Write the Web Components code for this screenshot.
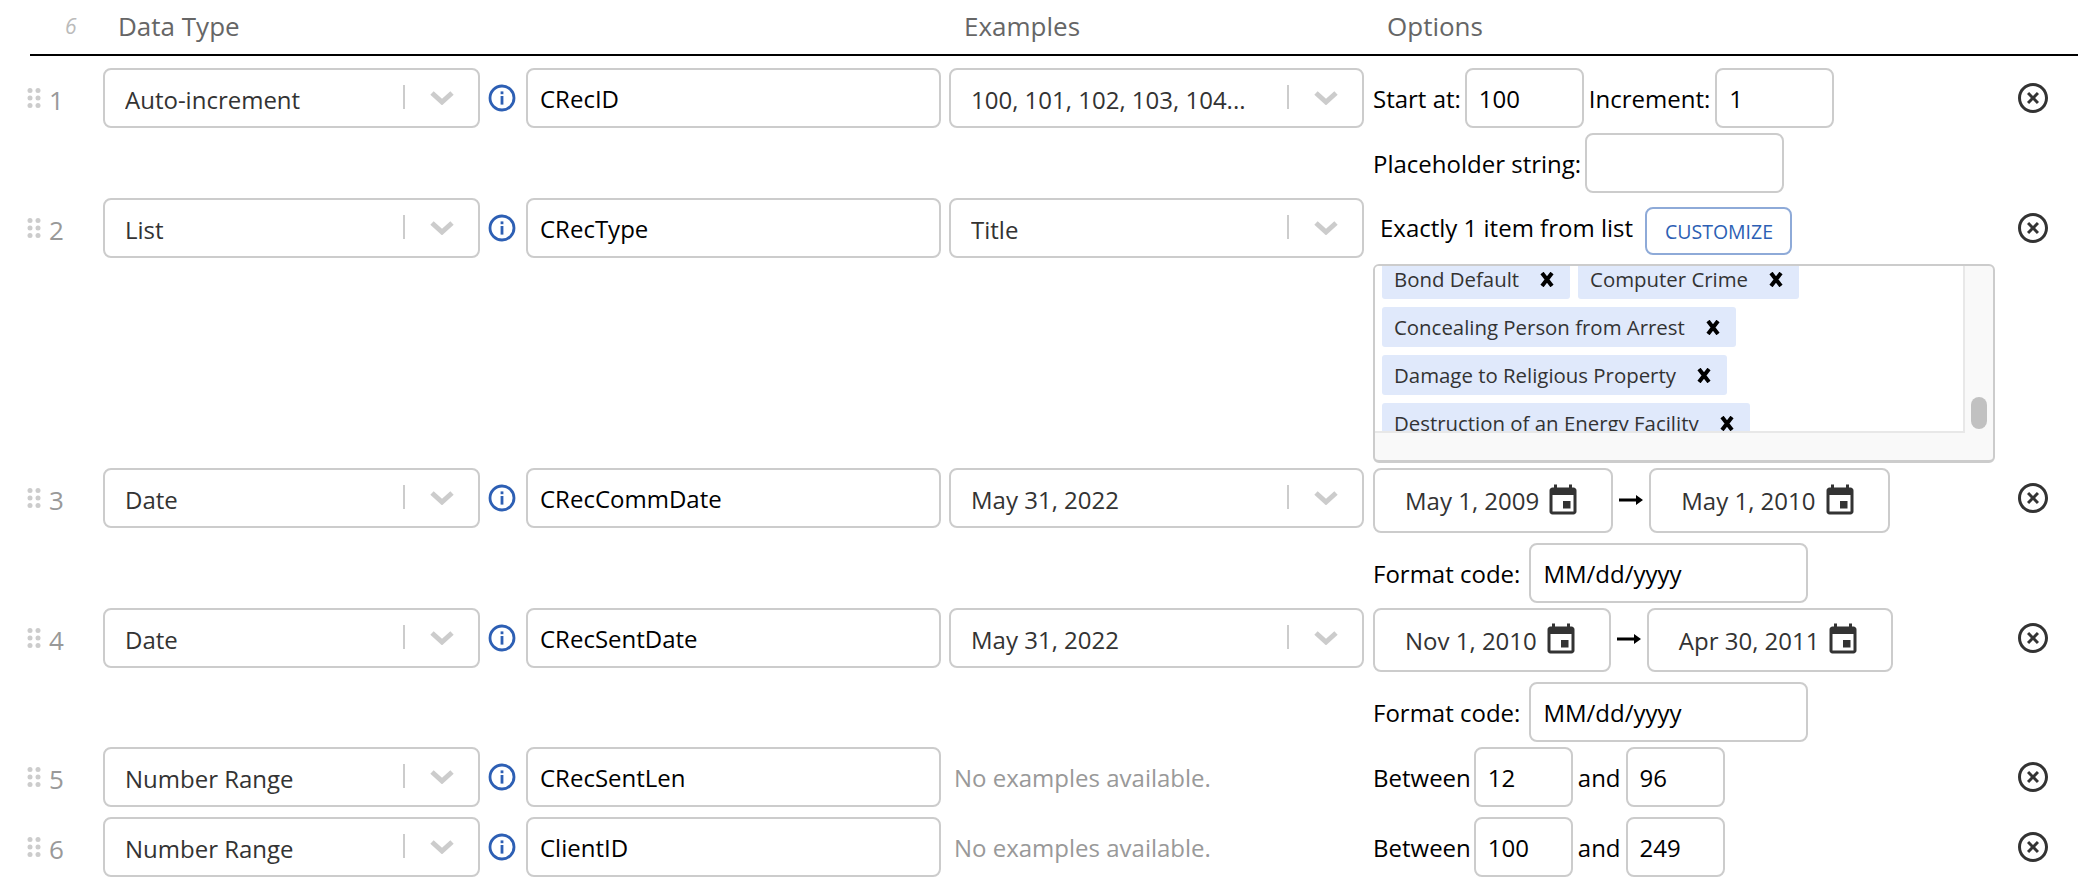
<!DOCTYPE html>
<html>
<head>
<meta charset="utf-8">
<style>
  html, body { margin: 0; padding: 0; background: #fff; overflow: hidden; }
  body { font-family: "Open Sans", sans-serif; font-size: 24px; color: #000; }
</style>
</head>
<body>
<sd-table>
  <sd-row num="1" type="Auto-increment" name="CRecID" example="100, 101, 102, 103, 104...">
    <sd-line>Start at:<sd-field style="width:119px;margin-left:-1px">100</sd-field>Increment:<sd-field style="width:119px">1</sd-field></sd-line>
    <sd-line style="margin-top:5px">Placeholder string:<sd-field style="width:199px;margin-left:-1px"></sd-field></sd-line>
  </sd-row>
  <sd-row num="2" type="List" name="CRecType" example="Title">
    <sd-line style="padding-left:7px"><span style="margin-top:-2px">Exactly 1 item from list</span><sd-button>CUSTOMIZE</sd-button></sd-line>
    <sd-list style="margin-top:6px">
      <sd-chip>Bond Default</sd-chip><sd-chip>Computer Crime</sd-chip>
      <sd-chip>Concealing Person from Arrest</sd-chip>
      <sd-chip>Damage to Religious Property</sd-chip>
      <sd-chip>Destruction of an Energy Facility</sd-chip>
    </sd-list>
  </sd-row>
  <sd-row num="3" type="Date" name="CRecCommDate" example="May 31, 2022">
    <sd-line style="height:65px"><sd-date>May 1, 2009</sd-date><sd-arrow></sd-arrow><sd-date>May 1, 2010</sd-date></sd-line>
    <sd-line style="margin-top:10px">Format code:<sd-field style="width:279px;margin-left:4px">MM/dd/yyyy</sd-field></sd-line>
  </sd-row>
  <sd-row num="4" type="Date" name="CRecSentDate" example="May 31, 2022">
    <sd-line style="height:64px"><sd-date>Nov 1, 2010</sd-date><sd-arrow></sd-arrow><sd-date>Apr 30, 2011</sd-date></sd-line>
    <sd-line style="margin-top:10px">Format code:<sd-field style="width:279px;margin-left:4px">MM/dd/yyyy</sd-field></sd-line>
  </sd-row>
  <sd-row num="5" type="Number Range" name="CRecSentLen">
    <sd-line>Between<sd-field style="width:99px;margin-left:-2px">12</sd-field>and<sd-field style="width:99px">96</sd-field></sd-line>
  </sd-row>
  <sd-row num="6" type="Number Range" name="ClientID">
    <sd-line>Between<sd-field style="width:99px;margin-left:-2px">100</sd-field>and<sd-field style="width:99px">249</sd-field></sd-line>
  </sd-row>
</sd-table>

<script>
const CHEVRON = `<svg width="24" height="14" viewBox="0 0 24 14"><path d="M2 2l10 9 10-9" fill="none" stroke="#ccc" stroke-width="5"/></svg>`;

class SdSelect extends HTMLElement {
  constructor() {
    super();
    this.attachShadow({ mode: 'open' }).innerHTML = `
      <style>
        :host { display: block; box-sizing: border-box; height: 60px; border: 2px solid #ccc; border-radius: 8px; background: #fff; color: #333; position: relative; }
        .box { display: flex; align-items: center; height: 100%; padding-left: 20px; }
        .val { flex: 1; white-space: nowrap; overflow: hidden; padding-top: 2px; }
        .sep { width: 2px; height: 24px; background: #ccc; margin-top: -2px; }
        .chev { width: 73px; display: flex; justify-content: center; }
      </style>
      <div class="box"><span class="val"><slot></slot></span><span class="sep"></span><span class="chev">${CHEVRON}</span></div>`;
  }
}
customElements.define('sd-select', SdSelect);

class SdField extends HTMLElement {
  constructor() {
    super();
    this.attachShadow({ mode: 'open' }).innerHTML = `
      <style>
        :host { display: flex; align-items: center; box-sizing: border-box; height: 60px; flex: none; border: 2px solid #ccc; border-radius: 8px; padding-left: 12px; background: #fff; color: #000; white-space: nowrap; }
      </style><slot></slot>`;
  }
}
customElements.define('sd-field', SdField);

class SdLine extends HTMLElement {
  constructor() {
    super();
    this.attachShadow({ mode: 'open' }).innerHTML = `
      <style>
        :host { display: flex; align-items: center; gap: 5px; height: 60px; white-space: nowrap; color: #000; }
      </style><slot></slot>`;
  }
}
customElements.define('sd-line', SdLine);

class SdButton extends HTMLElement {
  constructor() {
    super();
    this.attachShadow({ mode: 'open' }).innerHTML = `
      <style>
        :host { display: flex; align-items: center; box-sizing: border-box; height: 48px; margin: 6px 0 0 7px; padding: 0 17px 0 18px; border: 2px solid #8eaad8; border-radius: 8px; color: #2d5fb4; font-size: 19.5px; }
      </style><slot></slot>`;
  }
}
customElements.define('sd-button', SdButton);

class SdChip extends HTMLElement {
  constructor() {
    super();
    this.attachShadow({ mode: 'open' }).innerHTML = `
      <style>
        :host { display: inline-flex; align-items: center; box-sizing: border-box; height: 40px; padding: 0 16px 0 12px; margin: 0 8px 8px 0; background: #e0e9fb; border-radius: 3px; color: #333; font-size: 20.4px; white-space: nowrap; }
        svg { margin-left: 21px; }
      </style><slot></slot>
      <svg width="14" height="15" viewBox="0 0 14 15"><path d="M2 1l10 13M12 1L2 14" stroke="#000" stroke-width="4" fill="none"/></svg>`;
  }
}
customElements.define('sd-chip', SdChip);

class SdList extends HTMLElement {
  constructor() {
    super();
    this.attachShadow({ mode: 'open' }).innerHTML = `
      <style>
        :host { display: block; box-sizing: border-box; width: 622px; height: 199px; border: 2px solid #ccc; border-bottom-width: 3px; border-radius: 6px; background: #f9f9f9; position: relative; overflow: hidden; }
        .view { box-sizing: border-box; width: 590px; height: 167px; background: #fff; border-right: 2px solid #e8e8e8; border-bottom: 2px solid #e8e8e8; overflow: hidden; }
        .inner { margin-top: -7px; padding-left: 7px; display: flex; flex-wrap: wrap; align-content: flex-start; }
        .inner ::slotted(sd-chip:nth-child(n+3)) { margin-right: 100px; }
        .thumb { position: absolute; left: 596px; top: 131px; width: 16px; height: 32px; background: #c1c1c1; border-radius: 8px; }
      </style>
      <div class="view"><div class="inner"><slot></slot></div></div><div class="thumb"></div>`;
  }
}
customElements.define('sd-list', SdList);

class SdDate extends HTMLElement {
  constructor() {
    super();
    this.attachShadow({ mode: 'open' }).innerHTML = `
      <style>
        :host { display: flex; align-items: center; box-sizing: border-box; height: 100%; flex: none; padding: 0 30px 0 30px; border: 2px solid #ccc; border-radius: 8px; color: #333; white-space: nowrap; }
        svg { margin-left: 6px; }
      </style><slot></slot>
      <svg width="36" height="36" viewBox="0 0 24 24"><path fill="#333" d="M17 12h-5v5h5v-5zM16 1v2H8V1H6v2H5c-1.11 0-1.99.9-1.99 2L3 19c0 1.1.89 2 2 2h14c1.1 0 2-.9 2-2V5c0-1.1-.9-2-2-2h-1V1h-2zm3 18H5V8h14v11z"/></svg>`;
  }
}
customElements.define('sd-date', SdDate);

class SdArrow extends HTMLElement {
  constructor() {
    super();
    this.attachShadow({ mode: 'open' }).innerHTML = `
      <style>:host { display: block; flex: none; width: 24px; height: 12px; margin: -2px 1px 0; }</style>
      <svg width="24" height="12" viewBox="0 0 24 12" style="display:block"><path d="M0 4.6h18v2.8H0z M17 1l7 5-7 5z" fill="#000"/></svg>`;
  }
}
customElements.define('sd-arrow', SdArrow);

class SdRow extends HTMLElement {
  constructor() {
    super();
    const example = this.getAttribute('example');
    this.attachShadow({ mode: 'open' }).innerHTML = `
      <style>
        :host { display: grid; grid-template-columns: 103px 377px 46px 415px 423px 642px 1fr; min-height: 70px; padding-bottom: 5px; box-sizing: border-box; align-items: start; }
        .hnd { display: flex; align-items: center; height: 60px; padding-left: 27px; color: #999; font-size: 26px; }
        .hnd span { margin-left: 8px; margin-top: 3px; }
        .info { display: flex; align-items: center; justify-content: center; height: 60px; padding-right: 3px; }
        .ex { margin-left: 8px; }
        .none { display: flex; align-items: center; height: 60px; margin-left: 13px; padding-top: 1px; box-sizing: border-box; color: #999; white-space: nowrap; }
        .opts { margin-left: 9px; min-width: 0; }
        .del { display: flex; align-items: center; height: 60px; padding-left: 9px; }
      </style>
      <div class="hnd">
        <svg width="14" height="20" viewBox="0 0 14 20" fill="#ccc"><circle cx="3" cy="2.6" r="2.5"/><circle cx="11" cy="2.6" r="2.5"/><circle cx="3" cy="10" r="2.5"/><circle cx="11" cy="10" r="2.5"/><circle cx="3" cy="17.4" r="2.5"/><circle cx="11" cy="17.4" r="2.5"/></svg>
        <span>${this.getAttribute('num')}</span>
      </div>
      <sd-select>${this.getAttribute('type')}</sd-select>
      <div class="info"><svg width="28" height="28" viewBox="0 0 28 28"><circle cx="14" cy="14" r="12" fill="none" stroke="#2d5fb4" stroke-width="2.8"/><rect x="12.6" y="7.4" width="2.8" height="2.8" fill="#2d5fb4"/><rect x="12.6" y="12" width="2.8" height="8.6" fill="#2d5fb4"/></svg></div>
      <sd-field>${this.getAttribute('name')}</sd-field>
      ${example ? `<sd-select class="ex">${example}</sd-select>` : `<div class="none">No examples available.</div>`}
      <div class="opts"><slot></slot></div>
      <div class="del"><svg width="36" height="36" viewBox="0 0 24 24"><path fill="#333" d="M14.59 8L12 10.59 9.41 8 8 9.41 10.59 12 8 14.59 9.41 16 12 13.41 14.59 16 16 14.59 13.41 12 16 9.41 14.59 8zM12 2C6.47 2 2 6.47 2 12s4.47 10 10 10 10-4.47 10-10S17.53 2 12 2zm0 18c-4.41 0-8-3.59-8-8s3.59-8 8-8 8 3.59 8 8-3.59 8-8 8z"/></svg></div>`;
  }
}
customElements.define('sd-row', SdRow);

class SdTable extends HTMLElement {
  constructor() {
    super();
    this.attachShadow({ mode: 'open' }).innerHTML = `
      <style>
        :host { display: block; }
        .head { display: grid; grid-template-columns: 65px 53px 846px 423px 1fr; align-items: center; height: 54px; padding-bottom: 2px; box-sizing: border-box; color: #666; font-size: 26px; }
        .head span { white-space: nowrap; }
        .count { font-style: italic; font-size: 21px; color: #bbb; }
        hr { margin: 0 8px 12px 30px; border: 0; height: 2px; background: #000; }
      </style>
      <div class="head"><span></span><span class="count">6</span><span>Data Type</span><span>Examples</span><span>Options</span></div>
      <hr>
      <slot></slot>`;
  }
}
customElements.define('sd-table', SdTable);
</script>
</body>
</html>
